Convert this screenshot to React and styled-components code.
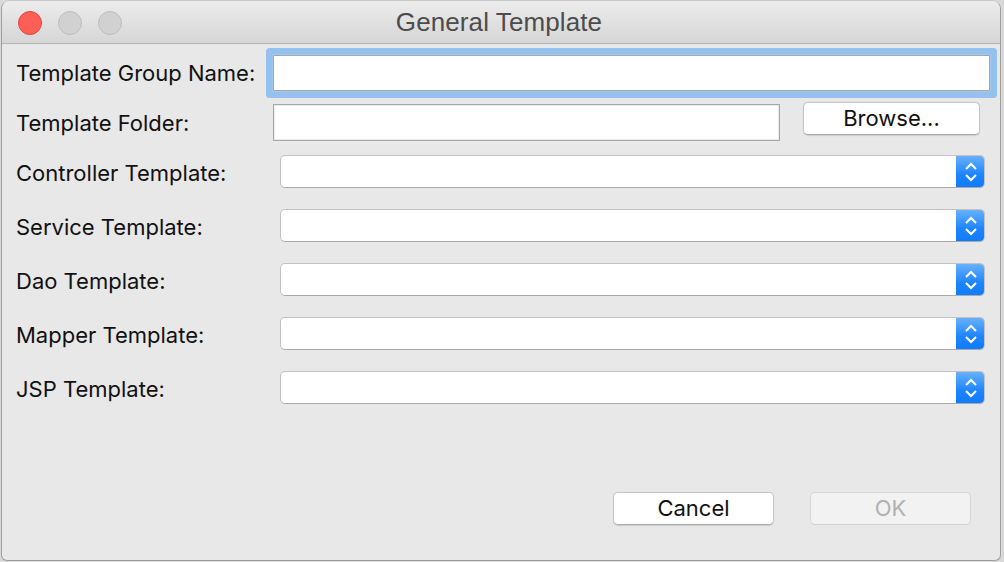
import React from 'react';
import styled, { createGlobalStyle } from 'styled-components';

const GlobalStyle = createGlobalStyle`
  html, body {
    margin: 0;
    padding: 0;
    background: #d9d9d9;
  }
  body {
    font-family: "Liberation Sans", Arial, sans-serif;
    width: 1004px;
    height: 562px;
    overflow: hidden;
  }
`;

const Window = styled.div`
  margin-left: 1px;
  width: 998px;
  height: 559px;
  background: #e8e8e8;
  border: 1px solid #9e9e9e;
  border-top-color: #c9c9c9;
  border-radius: 9px 9px 6px 6px;
  overflow: hidden;
  display: flex;
  flex-direction: column;
`;

const TitleBar = styled.div`
  height: 42px;
  flex: none;
  display: flex;
  align-items: center;
  background: linear-gradient(#ececec, #d6d6d6);
  border-bottom: 1px solid #b5b5b5;
  position: relative;
`;

const Lights = styled.div`
  display: flex;
  gap: 16px;
  padding-left: 16px;
  padding-top: 1px;
`;

const Light = styled.span`
  width: 22px;
  height: 22px;
  border-radius: 50%;
  background: ${p => (p.$red ? '#fd5f57' : '#d1d1d1')};
  border: 1px solid ${p => (p.$red ? '#e0443e' : '#bebebe')};
`;

const Title = styled.div`
  position: absolute;
  left: 0;
  right: 0;
  top: 0;
  bottom: 0;
  display: flex;
  align-items: center;
  justify-content: center;
  font-size: 26px;
  color: #4c4c4c;
  padding-right: 4px;
  letter-spacing: 0.1px;
  pointer-events: none;
`;

const Content = styled.div`
  flex: 1;
  display: flex;
  flex-direction: column;
  padding-left: 14px;
`;

const Row = styled.div`
  display: flex;
  align-items: center;
  height: ${p => p.$h}px;
  margin-top: ${p => p.$mt}px;
`;

const Label = styled.label`
  width: ${p => p.$w}px;
  flex: none;
  font-family: Inter, "Liberation Sans", sans-serif;
  font-size: 22px;
  color: #111;
  padding-top: ${p => p.$pt || 0}px;
  white-space: nowrap;
`;

const TextInput = styled.div`
  width: ${p => p.$w}px;
  height: 100%;
  box-sizing: border-box;
  background: #fff;
  border: 1px solid #a6a6a6;
  box-shadow: ${p =>
    p.$focus
      ? '0 0 0 1px #a3c8f0, 0 0 0 7px #95c1f0'
      : 'inset 0 0 0 1px #ececec'};
  border-radius: ${p => (p.$focus ? '1px' : '0')};
`;

const Button = styled.button`
  width: ${p => p.$w}px;
  height: 33px;
  box-sizing: border-box;
  margin-left: ${p => p.$ml || 0}px;
  align-self: ${p => (p.$top ? 'flex-start' : 'center')};
  margin-top: ${p => (p.$top ? '-2px' : '0')};
  background: ${p => (p.disabled ? '#f2f2f2' : '#fff')};
  border: 1px solid ${p => (p.disabled ? '#d6d6d6' : '#c6c6c6')};
  border-bottom-color: ${p => (p.disabled ? '#cfcfcf' : '#aaaaaa')};
  border-radius: 5px;
  box-shadow: ${p => (p.disabled ? 'none' : '0 0.5px 1px rgba(0,0,0,0.12)')};
  font-family: Inter, "Liberation Sans", sans-serif;
  font-size: 22px;
  color: ${p => (p.disabled ? '#b1b1b1' : '#111')};
  padding: 0 0 1px;
`;

const Select = styled.div`
  width: 705px;
  height: 33px;
  box-sizing: border-box;
  display: flex;
  background: #fff;
  border-radius: 5px;
  border: 1px solid #c2c2c2;
  border-bottom-color: #a9a9a9;
  overflow: hidden;
`;

const SelectBody = styled.div`
  flex: 1;
`;

const Stepper = styled.div`
  width: 29px;
  margin: -1px -1px -1px 0;
  display: flex;
  align-items: center;
  justify-content: center;
  background: linear-gradient(#6cb3fb, #1c84fd 60%, #0f7bfb);
`;

const Footer = styled.div`
  margin-top: auto;
  display: flex;
  justify-content: flex-end;
  gap: 36px;
  padding: 0 29px 35px 0;
`;

const Chevrons = () => (
  <svg width="14" height="24" viewBox="0 0 14 24">
    <path d="M2 9 L7 4 L12 9" fill="none" stroke="#fff" strokeWidth="2" />
    <path d="M2 15 L7 20 L12 15" fill="none" stroke="#fff" strokeWidth="2" />
  </svg>
);

const selects = [
  'Controller Template:',
  'Service Template:',
  'Dao Template:',
  'Mapper Template:',
  'JSP Template:',
];

export default function App() {
  return (
    <>
      <GlobalStyle />
      <Window>
        <TitleBar>
          <Lights>
            <Light $red />
            <Light />
            <Light />
          </Lights>
          <Title>General Template</Title>
        </TitleBar>
        <Content>
          <Row $h={36} $mt={11}>
            <Label $w={257}>Template Group Name:</Label>
            <TextInput $w={717} $focus />
          </Row>
          <Row $h={37} $mt={13}>
            <Label $w={257}>Template Folder:</Label>
            <TextInput $w={507} />
            <Button $w={177} $ml={23} $top>Browse...</Button>
          </Row>
          {selects.map((s, i) => (
            <Row key={s} $h={33} $mt={i === 0 ? 14 : 21}>
              <Label $w={264} $pt={3}>{s}</Label>
              <Select>
                <SelectBody />
                <Stepper>
                  <Chevrons />
                </Stepper>
              </Select>
            </Row>
          ))}
          <Footer>
            <Button $w={161}>Cancel</Button>
            <Button $w={161} disabled>OK</Button>
          </Footer>
        </Content>
      </Window>
    </>
  );
}
